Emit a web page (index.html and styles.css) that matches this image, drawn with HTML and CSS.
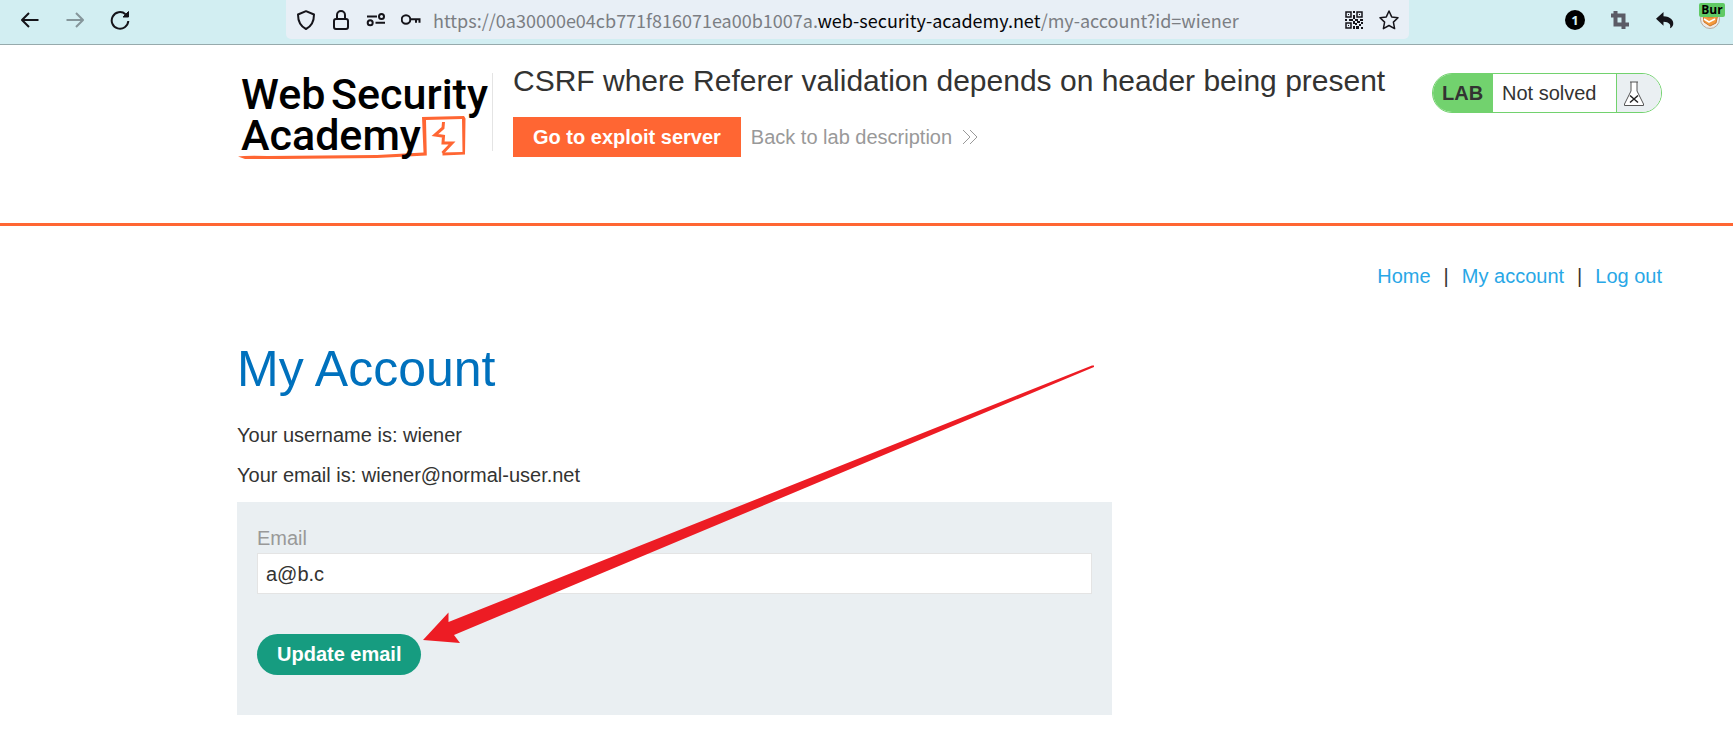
FILE: index.html
```html
<!DOCTYPE html>
<html lang="en">
<head>
<meta charset="utf-8">
<title>CSRF where Referer validation depends on header being present</title>
<link rel="stylesheet" href="styles.css">
</head>
<body>
<div class="toolbar">
  <div class="nav-buttons">
    <button class="icon-button" type="button" aria-label="Back"><svg class="icon" viewBox="0 0 20 20"><path d="M18.500 10H2M9 3L2 10l7 7"/></svg></button>
    <button class="icon-button disabled" type="button" aria-label="Forward"><svg class="icon" viewBox="0 0 20 20"><path d="M1.500 10H18M11 3l7 7-7 7"/></svg></button>
    <button class="icon-button" type="button" aria-label="Reload"><svg class="icon" viewBox="0 0 20 20"><path d="M15.500 4.200A8.300 8.300 0 1 0 18.300 11"/><path class="solid" d="M18.500 1.500v5.500h-5.500z"/></svg></button>
  </div>
  <div class="url-bar">
    <svg class="icon" viewBox="0 0 20 20"><path d="M10 1.200L18 4.500C18 11 16 16 10 19 4 16 2 11 2 4.500z"/></svg>
    <svg class="icon" viewBox="0 0 20 20"><rect x="3" y="9" width="14" height="10" rx="2"/><path d="M6 9V5a4 4 0 0 1 8 0v4"/></svg>
    <svg class="icon" viewBox="0 0 20 20"><path d="M1 6.500h10M9.500 12.800h9.500"/><circle cx="15.500" cy="6.500" r="2.500"/><circle cx="4.200" cy="12.800" r="2.500"/></svg>
    <svg class="icon" viewBox="0 0 20 20"><circle cx="5" cy="9.500" r="4.300"/><path d="M9.300 9.300H19.500M15 9.300v3.500M18.500 9.300v3.500"/></svg>
    <div class="url"><span>https://0a30000e04cb771f816071ea00b1007a.</span><span class="domain">web-security-academy.net</span><span>/my-account?id=wiener</span></div>
    <svg class="icon" viewBox="0 0 20 20"><path class="qr" d="M2 2h5v5H2zM13 2h5v5h-5zM2 13h5v5H2z"/><path class="fill" d="M4 4h1v1H4zM15 4h1v1h-1zM4 15h1v1H4zM9 1h2v2H9zM9 5h2v4H9zM1 9h2v2H1zM5 9h4v2H5zM11 9h3v2h-3zM16 9h3v2h-3zM9 11h2v3H9zM13 11h3v2h-3zM11 13h2v2h-2zM15 14h2v2h-2zM17 12h2v2h-2zM9 16h2v3H9zM12 16h3v3h-3zM17 17h2v2h-2z"/></svg>
    <svg class="icon star" viewBox="0 0 20 20"><path d="M10 1l2.700 5.900 6.300.8-4.600 4.400 1.200 6.500L10 15.500l-5.600 3.100 1.200-6.500L1 7.700l6.300-.8z"/></svg>
  </div>
  <div class="extensions">
    <button class="icon-button counter" type="button">1</button>
    <button class="icon-button" type="button" aria-label="Crop"><svg class="icon crop" viewBox="0 0 20 20"><path d="M1 5.500h12.500V19M5.500 1v13.500H19"/></svg></button>
    <button class="icon-button" type="button" aria-label="Undo"><svg class="icon" viewBox="0 0 20 20"><path class="fill" d="M8.500 2v4.200c7 .3 10.500 4.300 9.700 8.300-.4 1.900-1.500 3.200-3.200 3.700 1.200-3.700-.8-6.300-6.500-6.500v4L1 8.700z"/></svg></button>
    <button class="icon-button proxy" type="button"><svg class="icon" viewBox="0 0 20 20"><circle cx="10" cy="9" r="9.500" fill="#eeeae5" stroke="#b5aaa2" stroke-width="1"/><path fill="#f59a3c" stroke="#c9752c" stroke-width="1" d="M3 5l5 2h5l5-3-2 9-6 3-6-4z"/><path stroke="#fff" stroke-width="1.500" d="M4 9l5 3 6-3"/></svg><span class="badge">Bur</span></button>
  </div>
</div>

<header class="lab-header">
  <a class="logo" href="#" aria-label="Web Security Academy">
    <svg width="250" height="92" viewBox="0 3 250 92">
      <path fill="#ff6633" d="M1 86.500Q8 85.500 30 86l110-1 46.500-2.500L185 47l42-1 1.500 2.500-.5 36-22.500 1v-3l20-.5-.5-33-36 1 .8 35.500-49.800 2.500L45 89H8z"/>
      <path fill="none" stroke="#ff6633" stroke-width="3" d="M206.500 52l-.5 6-8 7 8.500 1.200-.5 6.800 9 0-9.500 10"/>
      <text x="4" y="39">Web</text><text x="94" y="39">Security</text><text x="4" y="80">Academy</text>
    </svg>
  </a>
  <div class="title-block">
    <h2>CSRF where Referer validation depends on header being present</h2>
    <div class="lab-links">
      <a class="exploit-button" href="#">Go to exploit server</a>
      <a class="back-link" href="#">Back to lab description <svg width="16" height="16" viewBox="0 0 16 16"><path d="M1 1l7 7-7 7M8 1l7 7-7 7"/></svg></a>
    </div>
  </div>
  <div class="lab-status">
    <span class="status-label">LAB</span>
    <span class="status-text">Not solved</span>
    <span class="status-flask"><svg width="22" height="26" viewBox="0 0 22 26"><path fill="#fff" d="M7 1h8M8 1v9L1.500 23v1.500h19V23L14 10V1"/><path class="cross" d="M7 14.500l8 7M15 14.500l-8 7"/></svg></span>
  </div>
</header>

<main class="page">
  <nav class="links"><a href="#">Home</a><span>|</span><a href="#">My account</a><span>|</span><a href="#">Log out</a></nav>
  <section class="account">
    <h1>My Account</h1>
    <p>Your username is: wiener</p>
    <p>Your email is: wiener@normal-user.net</p>
    <form class="email-form">
      <label for="email">Email</label>
      <input id="email" type="email" value="a@b.c">
      <button type="button">Update email</button>
      <svg class="arrow" width="672" height="278" viewBox="0 0 672 278" aria-hidden="true"><path d="M0 275L25.500 247.500V257L669 .500l2 0 0 1.500L31 270l6 8z"/></svg>
    </form>
  </section>
</main>
</body>
</html>
```
FILE: styles.css
```css
* { box-sizing: border-box; }

body {
  margin: 0;
  background: #fff;
  color: #333332;
  font: 20px/20px "Liberation Sans", Arial, sans-serif;
}

a { text-decoration: none; }
button { font-family: inherit; border: 0; cursor: pointer; }
svg { display: block; flex: none; }

.toolbar {
  display: flex;
  height: 45px;
  padding-bottom: 5px;
  background: #d2eef2;
  border-bottom: 1px solid #96aaac;
}

.nav-buttons {
  display: flex;
  align-items: center;
  gap: 25px;
  width: 286px;
  flex: none;
  padding-left: 20px;
}

.icon { width: 20px; height: 20px; fill: none; stroke: #15141a; stroke-width: 2; stroke-linejoin: round; }
.icon .solid { fill: #15141a; stroke-width: 1; }
.icon .fill { fill: #15141a; stroke: none; }
.icon .qr { stroke-width: 1.5; stroke-linejoin: miter; }
.icon.star { stroke-width: 1.5; }
.icon.crop { stroke: #5b5b66; stroke-width: 4; stroke-linejoin: miter; }
.icon-button { position: relative; width: 20px; height: 20px; padding: 0; background: none; flex: none; }
.disabled { opacity: .4; }

.url-bar {
  display: flex;
  align-items: center;
  gap: 15px;
  flex: 1;
  min-width: 0;
  padding: 0 10px;
  background: #e8eff6;
  border-radius: 0 0 5px 5px;
}

.url {
  flex: 1;
  min-width: 0;
  margin-left: -3px;
  overflow: hidden;
  white-space: nowrap;
  color: #7b7e83;
  font: 18px/28px "Noto Sans CJK SC", "Noto Sans", sans-serif;
}
.domain { color: #060608; }

.extensions {
  display: flex;
  align-items: center;
  gap: 25px;
  width: 324px;
  flex: none;
  padding-left: 156px;
}
.counter { border-radius: 50%; background: #000; color: #d2eef2; font: bold 13px/20px "Open Sans", sans-serif; }
.proxy .badge {
  position: absolute;
  left: -1px;
  top: -7px;
  width: 26px;
  padding: 0 2px;
  border-radius: 2px;
  background: #60ca65;
  color: #000;
  font: bold 12px/14px "Open Sans", sans-serif;
}

.lab-header {
  display: flex;
  align-items: flex-start;
  min-height: 181px;
  padding: 28px 71px 0 237px;
  border-bottom: 3px solid #ff6633;
}
.logo { padding-right: 5px; border-right: 1px solid #e4e4e4; height: 78px; }
.logo svg { overflow: visible; }
.logo text { font: 500 43px Roboto, sans-serif; fill: #000; }

.title-block { flex: 1; padding: 0 20px; }
h2 { margin: 0; font-size: 30px; line-height: 16px; font-weight: 400; }
.lab-links { display: flex; gap: 10px; margin-top: 28px; }
.exploit-button { padding: 0 20px; background: #ff6633; color: #fff; font-weight: 700; line-height: 40px; }
.back-link { display: flex; align-items: center; gap: 10px; color: #999; }
.back-link path { fill: none; stroke: #999; }

.lab-status {
  display: flex;
  width: 230px;
  height: 40px;
  line-height: 38px;
  border: 1px solid #72d26e;
  border-radius: 20px;
  overflow: hidden;
}
.status-label { width: 60px; padding-left: 9px; background: #72d26e; font-weight: 700; }
.status-text { flex: 1; padding-left: 9px; }
.status-flask { width: 45px; padding: 7px 6px; background: #eaeff2; border-left: 1px solid #72d26e; }
.status-flask path { stroke: #555; stroke-width: 1; }
.status-flask .cross { stroke: #222; stroke-width: 1.5; fill: none; }

.page { padding: 40px 71px 37px 237px; }
.links { display: flex; justify-content: flex-end; gap: 13px; }
.links a { color: #29a7e6; }

.account { max-width: 875px; }
h1 { margin: 58px 0 31px; color: #0071bd; font-size: 50px; line-height: 50px; font-weight: 400; }
.account p { margin: 0 0 20px; }

.email-form {
  position: relative;
  display: flex;
  flex-direction: column;
  align-items: flex-start;
  margin-top: -3px;
  padding: 26px 20px 40px;
  background: #eaeff2;
}
.email-form label { color: #999; }
.email-form input {
  width: 100%;
  height: 41px;
  margin: 5px 0 40px;
  padding: 2px 8px 0;
  border: 1px solid #e4e4e4;
  background: #fff;
  color: inherit;
  font: inherit;
}
.email-form button {
  height: 41px;
  padding: 0 20px;
  border-radius: 21px;
  background: #169c80;
  color: #fff;
  font-size: 20px;
  font-weight: 700;
}
.arrow { position: absolute; left: 186px; top: -137px; fill: #ed1c24; pointer-events: none; }
```
